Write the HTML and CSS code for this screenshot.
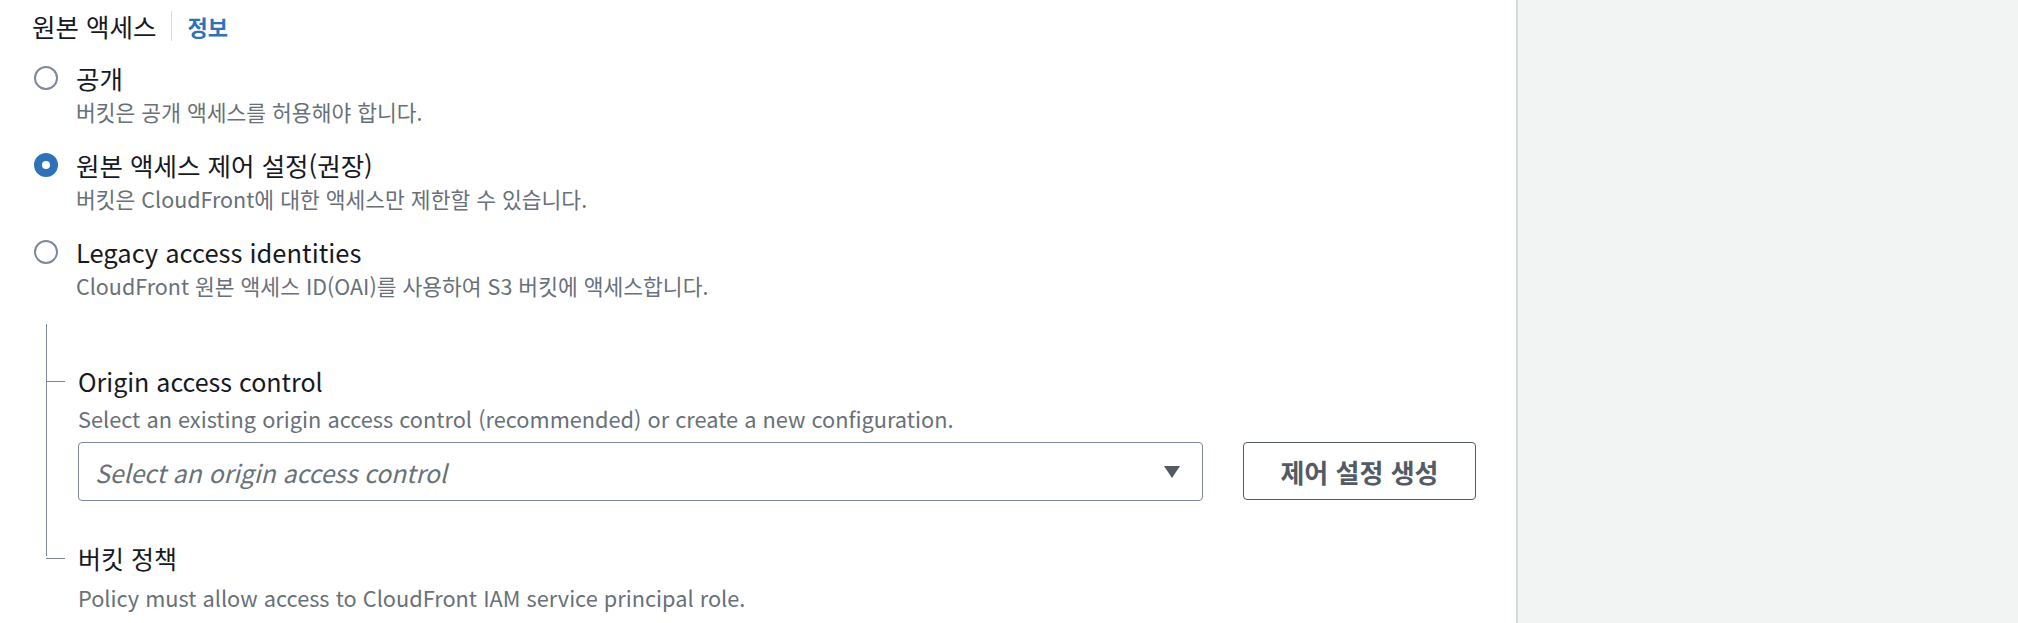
FILE: index.html
```html
<!DOCTYPE html>
<html lang="ko">
<head>
  <meta charset="UTF-8">
  <title>원본 액세스</title>
  <link rel="stylesheet" href="styles.css">
</head>
<body>

  <div class="page">
    <main class="panel">

      <div class="field-head">
        <span class="field-label">원본 액세스</span>
        <span class="divider"></span>
        <a class="info-link" href="#">정보</a>
      </div>

      <!-- 원본 액세스 선택 -->
      <div class="radio-group">
        <label class="radio-option">
          <span class="radio"></span>
          <span class="radio-text">
            <span class="radio-title">공개</span>
            <span class="radio-desc">버킷은 공개 액세스를 허용해야 합니다.</span>
          </span>
        </label>
        <label class="radio-option">
          <span class="radio checked"></span>
          <span class="radio-text">
            <span class="radio-title">원본 액세스 제어 설정(권장)</span>
            <span class="radio-desc">버킷은 CloudFront에 대한 액세스만 제한할 수 있습니다.</span>
          </span>
        </label>
        <label class="radio-option">
          <span class="radio"></span>
          <span class="radio-text">
            <span class="radio-title">Legacy access identities</span>
            <span class="radio-desc">CloudFront 원본 액세스 ID(OAI)를 사용하여 S3 버킷에 액세스합니다.</span>
          </span>
        </label>
      </div>

      <!-- 하위 설정 -->
      <div class="tree">
        <div class="tree-item">
          <div class="item-title">Origin access control</div>
          <div class="item-desc">Select an existing origin access control (recommended) or create a new configuration.</div>
          <div class="select-row">
            <div class="select">
              <span class="placeholder">Select an origin access control</span>
              <svg class="caret" width="16" height="12" viewBox="0 0 16 12"><polygon points="0,0 16,0 8,12" fill="#545b64"/></svg>
            </div>
            <button class="btn">제어 설정 생성</button>
          </div>
        </div>
        <div class="tree-item">
          <div class="item-title">버킷 정책</div>
          <div class="item-desc">Policy must allow access to CloudFront IAM service principal role.</div>
        </div>
      </div>

    </main>
    <aside class="side"></aside>
  </div>

</body>
</html>
```

FILE: styles.css
```css
body {
  margin: 0;
  font-family: "Noto Sans CJK KR", sans-serif;
  color: #16191f;
}
.page {
  display: grid;
  grid-template-columns: 1fr 502px;
  height: 623px;
  overflow: hidden;
}
.panel {
  padding: 9px 40px 0 32px;
  background-color: #fff;
}
.side {
  background-color: #f2f3f3;
  border-left: 2px solid #d5dbdb;
}
.field-head {
  display: flex;
  align-items: center;
  height: 34px;
}
.field-label {
  font-size: 25.5px;
  line-height: 34px;
}
.divider {
  width: 1px;
  height: 30px;
  background-color: #d5dbdb;
  margin: 0 15px;
}
.info-link {
  font-size: 22px;
  font-weight: 700;
  color: #2e73b9;
  text-decoration: none;
}
.radio-group {
  display: flex;
  flex-direction: column;
  gap: 21px;
  margin-top: 18px;
}
.radio-option {
  display: flex;
  gap: 18px;
  padding-left: 2px;
}
.radio {
  flex: none;
  width: 24px;
  height: 24px;
  box-sizing: border-box;
  border: 2px solid #7d8998;
  border-radius: 50%;
  margin-top: 5px;
}
.radio.checked {
  border: 8px solid #2e73b9;
}
.radio-title {
  display: block;
  font-size: 25.5px;
  line-height: 34px;
}
.radio-desc {
  display: block;
  font-size: 21.5px;
  line-height: 30px;
  margin-top: 2px;
  color: #687078;
}
.tree {
  position: relative;
  margin: 23px 0 0 14px;
  padding: 40px 0 0 32px;
}
.tree::before {
  content: "";
  position: absolute;
  left: 0;
  top: 0;
  bottom: 57px;
  border-left: 1px solid #7d8998;
}
.tree-item {
  position: relative;
}
.tree-item + .tree-item {
  margin-top: 40px;
}
.tree-item::before {
  content: "";
  position: absolute;
  left: -32px;
  top: 17px;
  width: 19px;
  border-top: 1px solid #7d8998;
}
.item-title {
  font-size: 25px;
  line-height: 34px;
}
.item-desc {
  font-size: 21.75px;
  line-height: 30px;
  margin-top: 6px;
  color: #687078;
}
.tree-item + .tree-item .item-desc {
  margin-top: 8px;
}
.select-row {
  display: flex;
  gap: 40px;
  margin-top: 8px;
}
.select {
  flex: 1;
  height: 59px;
  box-sizing: border-box;
  border: 1px solid #7d8998;
  border-radius: 4px;
  display: flex;
  align-items: center;
  justify-content: space-between;
  padding: 0 22px 0 16px;
}
.placeholder {
  font-size: 24.7px;
  font-style: italic;
  color: #687078;
}
.btn {
  flex: none;
  width: 233px;
  height: 58px;
  border: 1px solid #545b64;
  border-radius: 4px;
  background-color: #fff;
  font-family: "Noto Sans CJK KR", sans-serif;
  font-size: 26px;
  font-weight: 700;
  color: #545b64;
  cursor: pointer;
}
```
